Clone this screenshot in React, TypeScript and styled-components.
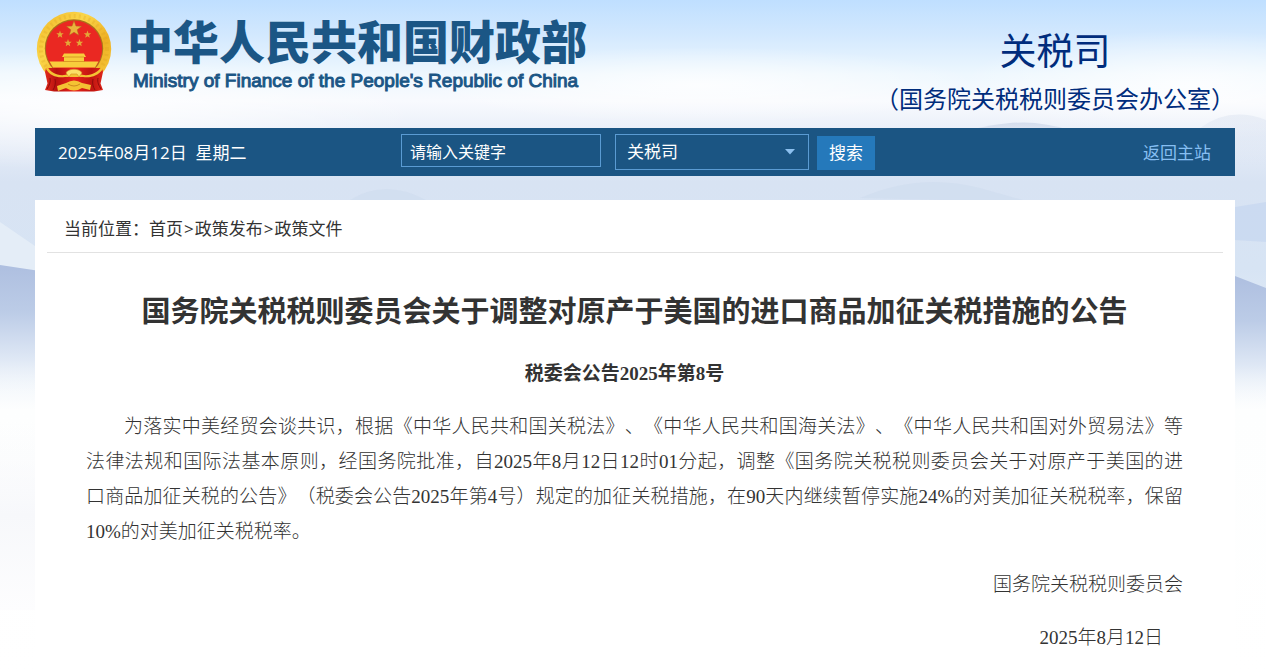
import React from 'react';
import styled, { createGlobalStyle } from 'styled-components';

const sans = `"Open Sans", "Noto Sans CJK SC", sans-serif`;
const song = `"Liberation Serif", "Noto Sans CJK SC", serif`;

const GlobalStyle = createGlobalStyle`
  * { box-sizing: border-box; }
  body {
    margin: 0;
    background: #fff;
    color: #333;
    font-family: ${sans};
    text-spacing-trim: space-all;
  }
  a { color: inherit; text-decoration: none; }
`;

const Page = styled.div`
  position: relative;
  isolation: isolate;
  min-height: 100vh;
  padding: 0 31px 0 35px;
  overflow: hidden;
`;

const Scenery = styled.svg`
  position: absolute;
  z-index: -1;
  inset: 0 0 auto 0;
  width: 100%;
  height: 672px;
`;

const Header = styled.header`
  display: flex;
  justify-content: space-between;
  height: 128px;
`;

const Brand = styled.a`
  display: flex;
  gap: 15px;
  padding-top: 10px;
  color: #1b5685;
`;

const EmblemImage = styled.svg`
  width: 76px;
  height: 83px;
  margin-left: 1px;
`;

const BrandText = styled.span`
  display: flex;
  flex-direction: column;
`;

const BrandName = styled.span`
  font: 900 46px/62px ${sans};
  white-space: nowrap;
`;

const BrandEnglish = styled.span`
  padding-left: 6px;
  font: 400 19px/18px "Liberation Sans", sans-serif;
  -webkit-text-stroke: 1px #1b5685;
  white-space: nowrap;
`;

const Department = styled.div`
  padding-top: 27px;
  color: #002c7c;
  text-align: center;
  white-space: nowrap;
`;

const DepartmentName = styled.div`
  font-size: 37px;
  line-height: 48px;
`;

const DepartmentOffice = styled.div`
  font-size: 24px;
  line-height: 48px;
`;

const Toolbar = styled.nav`
  display: grid;
  grid-template-columns: 343px 1fr auto;
  height: 48px;
  padding: 0 24px 0 23px;
  background: #1b5583;
  color: #fff;
  font-size: 17px;
  line-height: 50px;
`;

const Today = styled.time`
  white-space: pre;
`;

const SearchForm = styled.form`
  display: flex;
  align-items: flex-start;
  padding-top: 6px;
`;

const Keyword = styled.input`
  width: 200px;
  height: 33px;
  padding: 0 8px;
  border: 1px solid #5a9bd3;
  border-radius: 0;
  background: transparent;
  color: #fff;
  font: 16px/31px ${sans};
  outline: none;
`;

const SelectBox = styled.div`
  position: relative;
  display: flex;
  width: 194px;
  height: 36px;
  margin: 0 8px 0 14px;
`;

const SiteSelect = styled.select`
  width: 100%;
  padding: 0 11px;
  border: 1px solid #5a9bd3;
  border-radius: 0;
  background: transparent;
  color: #fff;
  font: 17px/34px ${sans};
  appearance: none;
  outline: none;
`;

const Caret = styled.svg`
  position: absolute;
  top: 15px;
  right: 14px;
  width: 10px;
  height: 6px;
  pointer-events: none;
`;

const SearchButton = styled.button`
  width: 58px;
  height: 34px;
  margin-top: 2px;
  padding: 0;
  border: 0;
  background: #2579bb;
  color: #fff;
  font: 17px/34px ${sans};
`;

const HomeLink = styled.a`
  && { color: #86bff2; }
`;

const Panel = styled.main`
  min-height: 500px;
  margin-top: 24px;
  padding: 0 12px;
  background: #fff;
`;

const Breadcrumb = styled.nav`
  height: 53px;
  padding: 4px 17px 0;
  border-bottom: 1px solid #e2e2e2;
  font-size: 17px;
  line-height: 50px;
`;

const Separator = styled.span`
  padding: 0 1px;
`;

const Article = styled.article`
  padding: 33px 40px 18px 39px;
`;

const Title = styled.h1`
  margin: 0 0 20px;
  font-size: 29px;
  font-weight: 700;
  line-height: 50px;
  text-align: center;
`;

const Paragraph = styled.p<{ $align?: 'center' | 'right'; $bold?: boolean; $inset?: boolean }>`
  margin: 0 0 18px;
  padding-right: ${p => (p.$inset ? 20 : 0)}px;
  font-family: ${song};
  font-size: 19px;
  font-weight: ${p => (p.$bold ? 700 : 300)};
  line-height: 35px;
  text-align: ${p => p.$align ?? 'justify'};
  text-indent: ${p => (p.$align ? 0 : '2em')};
`;

const star = (cx: number, cy: number, r: number) =>
  Array.from({ length: 10 }, (_, i) => {
    const a = (Math.PI / 5) * i - Math.PI / 2;
    const d = i % 2 ? r * 0.42 : r;
    return `${(cx + d * Math.cos(a)).toFixed(2)},${(cy + d * Math.sin(a)).toFixed(2)}`;
  }).join(' ');

const Emblem = () => (
  <EmblemImage viewBox="0 0 76 83" aria-hidden="true">
    <defs>
      <linearGradient id="gold" x1="0" y1="0" x2="1" y2="1">
        <stop offset="0" stopColor="#f0b625" />
        <stop offset=".35" stopColor="#fbd64a" />
        <stop offset=".65" stopColor="#eeb024" />
        <stop offset="1" stopColor="#f8cf40" />
      </linearGradient>
      <linearGradient id="drape" x1="0" y1="0" x2="1" y2="0">
        <stop offset="0" stopColor="#e02a1c" />
        <stop offset=".2" stopColor="#b8120f" />
        <stop offset=".5" stopColor="#e8241c" />
        <stop offset=".8" stopColor="#c01510" />
        <stop offset="1" stopColor="#dd261b" />
      </linearGradient>
    </defs>
    <circle cx="38" cy="39" r="37.2" fill="url(#gold)" />
    <circle cx="38" cy="39" r="33" fill="none" stroke="#d99a1c" strokeWidth="4" strokeDasharray="2 3" opacity=".25" />
    <circle cx="38" cy="38.5" r="29.2" fill="#a9741a" />
    <circle cx="38" cy="38.8" r="28.2" fill="#ea2822" />
    <polygon points={star(38, 18.8, 8)} fill="#e9b53c" stroke="#b5601c" strokeWidth=".5" />
    <polygon points={star(24, 24.5, 3.9)} fill="#e3a838" />
    <polygon points={star(51.5, 24.5, 3.9)} fill="#e3a838" />
    <polygon points={star(32, 33, 3.9)} fill="#e3a838" />
    <polygon points={star(43.5, 33, 3.9)} fill="#e3a838" />
    <path d="M28 43.500h20l2 3.500h-2v4.500h14.500L59 57.500H17L13.500 51.500H28V47h-2z" fill="#f8cd3c" />
    <path d="M28 47h20M27 51.500h22" stroke="#d08c1e" strokeWidth=".8" />
    <path d="M10 58h56l1 4-2.500 11.500 2.500 6.500-9 1.500H18L9 80l2.500-6.500L9 62z" fill="url(#drape)" />
    <path d="M11 56c4 8 13 11 22 8 1-5 9-5 10 0 9 3 18 0 23-8l1 3c-5 7-12 9-20 8H29c-8 1-15-1-19-8z" fill="#f4c233" />
    <path d="M30 63c2-5 14-5 16 0l-3 4-2-3h-6l-2 3z" fill="#fbdf66" stroke="#d08c1e" strokeWidth=".6" />
    <path d="M14 68c1 4-1 8-3 11M19 69c1 4 0 8-2 11M62 68c-1 4 1 8 3 11M57 69c-1 4 0 8 2 11" stroke="#8f0c0c" strokeWidth="1" fill="none" />
    <path d="M30 73q8-5 16 0l9 2-1 5-8-2q-8 5-16 0l-8 3-1-5z" fill="#f4c233" />
    <path d="M32 74q6 4 12 0" stroke="#c47a18" strokeWidth=".8" fill="none" />
  </EmblemImage>
);

const Backdrop = () => (
  <Scenery viewBox="0 0 1266 672" preserveAspectRatio="none" aria-hidden="true">
    <defs>
      <linearGradient id="sky" x1="0" y1="0" x2="0" y2="1">
        <stop offset="0" stopColor="#bfdfff" />
        <stop offset=".05" stopColor="#d2e8fe" />
        <stop offset=".11" stopColor="#edf7fe" />
        <stop offset=".15" stopColor="#f8fafe" />
        <stop offset=".2" stopColor="#e8eef8" />
        <stop offset=".27" stopColor="#d8e3f3" />
        <stop offset=".4" stopColor="#d7e4f4" />
        <stop offset=".5" stopColor="#e3ecf7" />
        <stop offset=".61" stopColor="#fdfefe" />
        <stop offset="1" stopColor="#ffffff" />
      </linearGradient>
      <linearGradient id="ridge" x1="0" y1="0" x2="0" y2="1">
        <stop offset="0" stopColor="#aebfe0" />
        <stop offset=".35" stopColor="#bccce7" />
        <stop offset=".7" stopColor="#dfe8f5" />
        <stop offset="1" stopColor="#fbfdfe" stopOpacity="0" />
      </linearGradient>
      <linearGradient id="mist" x1="0" y1="0" x2="0" y2="1">
        <stop offset="0" stopColor="#c3cfe4" />
        <stop offset="1" stopColor="#d9e3f2" stopOpacity="0" />
      </linearGradient>
      <linearGradient id="haze" x1="0" y1="0" x2="0" y2="1">
        <stop offset="0" stopColor="#f9fafc" stopOpacity="0" />
        <stop offset=".5" stopColor="#f7f8fb" />
        <stop offset="1" stopColor="#fdfdfe" />
      </linearGradient>
      <radialGradient id="cloud">
        <stop offset="0" stopColor="#ffffff" stopOpacity=".8" />
        <stop offset="1" stopColor="#ffffff" stopOpacity="0" />
      </radialGradient>
    </defs>
    <rect width="1266" height="672" fill="url(#sky)" />
    <ellipse cx="90" cy="110" rx="330" ry="60" fill="url(#cloud)" />
    <ellipse cx="1190" cy="85" rx="230" ry="55" fill="url(#cloud)" />
    <ellipse cx="700" cy="85" rx="280" ry="38" fill="url(#cloud)" />
    <path d="M960 132Q1010 120 1035 123Q1060 126 1075 132L1120 150H900z" fill="url(#mist)" opacity=".6" />
    <path d="M1200 128q30-22 66-8v50h-66z" fill="url(#mist)" opacity=".25" />
    <path d="M350 200q35-22 76 0zM860 198q60-26 120-10l50 14z" fill="#c9d6eb" opacity=".35" />
    <path d="M0 222L35 246V274L0 266z" fill="#e4edf7" />
    <path d="M0 265L60 274V400H0z" fill="url(#ridge)" />
    <path d="M1235 207L1266 202V242L1235 240z" fill="#c5d6ef" opacity=".65" />
    <path d="M1235 276L1266 288V405H1235z" fill="url(#ridge)" />
    <rect y="420" width="35" height="190" fill="url(#haze)" />
  </Scenery>
);

export default function App() {
  return (
    <>
      <GlobalStyle />
      <Page>
        <Backdrop />
        <Header>
          <Brand href="#">
            <Emblem />
            <BrandText>
              <BrandName>中华人民共和国财政部</BrandName>
              <BrandEnglish>Ministry of Finance of the People's Republic of China</BrandEnglish>
            </BrandText>
          </Brand>
          <Department>
            <DepartmentName>关税司</DepartmentName>
            <DepartmentOffice>（国务院关税税则委员会办公室）</DepartmentOffice>
          </Department>
        </Header>

        <Toolbar>
          <Today dateTime="2025-08-12">{'2025年08月12日  星期二'}</Today>
          <SearchForm onSubmit={e => e.preventDefault()}>
            <Keyword type="text" aria-label="请输入关键字" defaultValue="请输入关键字" />
            <SelectBox>
              <SiteSelect aria-label="搜索范围" defaultValue="gss">
                <option value="gss">关税司</option>
              </SiteSelect>
              <Caret viewBox="0 0 10 6" aria-hidden="true">
                <path d="M0 0h10L5 5.500z" fill="#8cc0ef" />
              </Caret>
            </SelectBox>
            <SearchButton type="submit">搜索</SearchButton>
          </SearchForm>
          <HomeLink href="#">返回主站</HomeLink>
        </Toolbar>

        <Panel>
          <Breadcrumb aria-label="当前位置">
            当前位置：<a href="#">首页</a><Separator>&gt;</Separator><a href="#">政策发布</a><Separator>&gt;</Separator><a href="#">政策文件</a>
          </Breadcrumb>
          <Article>
            <Title>国务院关税税则委员会关于调整对原产于美国的进口商品加征关税措施的公告</Title>
            <Paragraph $align="center" $bold $inset>税委会公告2025年第8号</Paragraph>
            <Paragraph>
              为落实中美经贸会谈共识，根据《中华人民共和国关税法》、《中华人民共和国海关法》、《中华人民共和国对外贸易法》等法律法规和国际法基本原则，经国务院批准，自2025年8月12日12时01分起，调整《国务院关税税则委员会关于对原产于美国的进口&#8288;商品加征关税的公告》（税委会公告2025年第4号）规定的加征关税措施，在90天内继续暂停实施24%的对美加征关税税率，保留10%的对美加征关税税率。
            </Paragraph>
            <Paragraph $align="right">国务院关税税则委员会</Paragraph>
            <Paragraph $align="right" $inset>2025年8月12日</Paragraph>
          </Article>
        </Panel>
      </Page>
    </>
  );
}
